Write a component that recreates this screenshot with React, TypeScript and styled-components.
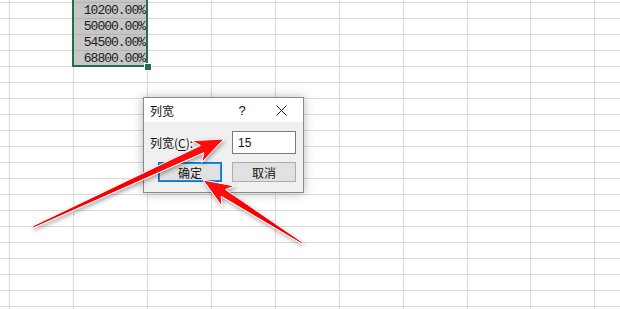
import React from 'react';
import styled, { createGlobalStyle } from 'styled-components';

const GlobalStyle = createGlobalStyle`
  html, body {
    margin: 0;
    padding: 0;
    background: #ffffff;
    overflow: hidden;
  }
  body {
    font-family: "Noto Sans CJK SC", "Liberation Sans", sans-serif;
  }
`;

const COLUMN_WIDTHS = [10, 64, 74, 64, 64, 64, 64, 64, 63, 64, 40];
const ROW_COUNT = 21;
const SELECTED_COLUMN = 2;
const VALUES = ['14400.00%', '10200.00%', '50000.00%', '54500.00%', '68800.00%'];

const Page = styled.div`
  position: relative;
  width: 620px;
  height: 309px;
  overflow: hidden;
`;

const Sheet = styled.div`
  display: grid;
  grid-template-columns: ${COLUMN_WIDTHS.map((w) => `${w}px`).join(' ')};
  grid-auto-rows: 16px;
  margin-top: -13px;
`;

const Cell = styled.div<{ $selected?: boolean }>`
  box-sizing: border-box;
  border-right: 1px solid ${(p) => (p.$selected ? '#b4b4b4' : '#dadada')};
  border-bottom: 1px solid ${(p) => (p.$selected ? '#b4b4b4' : '#dadada')};
  background: ${(p) => (p.$selected ? '#c6c6c6' : '#ffffff')};
  display: flex;
  align-items: flex-end;
  justify-content: flex-end;
  padding-right: 2px;
  font-family: "Liberation Mono", monospace;
  font-size: 13px;
  letter-spacing: -1px;
  line-height: 14px;
  color: #1a1a1a;
  overflow: hidden;
  white-space: nowrap;
`;

const Selection = styled.div`
  position: absolute;
  left: 72px;
  top: -20px;
  width: 76px;
  height: 87px;
  box-sizing: border-box;
  border: 2px solid #217346;
  pointer-events: none;
`;

const FillHandle = styled.div`
  position: absolute;
  left: 144px;
  top: 63px;
  width: 6px;
  height: 6px;
  background: #217346;
  border: 1px solid #ffffff;
  box-sizing: content-box;
`;

const Dialog = styled.div`
  position: absolute;
  left: 143px;
  top: 97px;
  width: 161px;
  height: 96px;
  box-sizing: border-box;
  border: 1px solid #8a8a8a;
  background: #f0f0f0;
  box-shadow: 0 0 10px rgba(0, 0, 0, 0.28);
  display: flex;
  flex-direction: column;
  font-size: 12px;
  color: #111;
`;

const TitleBar = styled.div`
  height: 24px;
  background: #ffffff;
  display: flex;
  align-items: center;
  padding-left: 6px;
`;

const Title = styled.span`
  flex: 1;
`;

const HelpGlyph = styled.span`
  width: 36px;
  text-align: center;
  font-family: "Liberation Sans", sans-serif;
  font-size: 13px;
`;

const CloseButton = styled.span`
  width: 43px;
  height: 24px;
  display: flex;
  align-items: center;
  justify-content: center;
`;

const Body = styled.div`
  flex: 1;
  display: flex;
  flex-direction: column;
  padding: 9px 7px 0 6px;
  gap: 8px;
`;

const FieldRow = styled.div`
  display: flex;
  align-items: center;
  justify-content: space-between;
`;

const Label = styled.span`
  u {
    text-decoration: underline;
    text-underline-offset: 2px;
  }
`;

const Input = styled.div`
  width: 64px;
  height: 23px;
  box-sizing: border-box;
  border: 1px solid #7a7a7a;
  background: #ffffff;
  display: flex;
  align-items: center;
  padding-left: 5px;
  font-family: "Liberation Sans", sans-serif;
  font-size: 12px;
`;

const ButtonRow = styled.div`
  display: flex;
  justify-content: flex-end;
  gap: 10px;
`;

const Button = styled.div<{ $primary?: boolean }>`
  width: 64px;
  height: 20px;
  box-sizing: border-box;
  display: flex;
  align-items: center;
  justify-content: center;
  background: #e1e1e1;
  border: 1px solid ${(p) => (p.$primary ? '#0078d7' : '#adadad')};
  box-shadow: ${(p) => (p.$primary ? 'inset 0 0 0 1px #2a8ae0' : 'none')};
  font-size: 12px;
`;

const Arrows = styled.svg`
  position: absolute;
  left: 0;
  top: 0;
  pointer-events: none;
`;

const Sheetgrid: React.FC = () => {
  const cells: React.ReactNode[] = [];
  for (let r = 0; r < ROW_COUNT; r++) {
    COLUMN_WIDTHS.forEach((_, c) => {
      const selected = c === SELECTED_COLUMN && r < VALUES.length;
      cells.push(
        <Cell key={`${r}-${c}`} $selected={selected}>
          {selected ? VALUES[r] : null}
        </Cell>
      );
    });
  }
  return <Sheet>{cells}</Sheet>;
};

const App: React.FC = () => {
  return (
    <Page>
      <GlobalStyle />
      <Sheetgrid />
      <Selection />
      <FillHandle />

      <Dialog>
        <TitleBar>
          <Title>列宽</Title>
          <HelpGlyph>?</HelpGlyph>
          <CloseButton>
            <svg width="11" height="11" viewBox="0 0 11 11">
              <path d="M0.5 0.5 L10.5 10.5 M10.5 0.5 L0.5 10.5" stroke="#222" strokeWidth="1" />
            </svg>
          </CloseButton>
        </TitleBar>
        <Body>
          <FieldRow>
            <Label>
              列宽(<u>C</u>):
            </Label>
            <Input>15</Input>
          </FieldRow>
          <ButtonRow>
            <Button $primary>确定</Button>
            <Button>取消</Button>
          </ButtonRow>
        </Body>
      </Dialog>

      <Arrows width="620" height="309" viewBox="0 0 620 309">
        <defs>
          <filter id="arrowShadow" x="-20%" y="-20%" width="140%" height="140%">
            <feDropShadow dx="1" dy="2" stdDeviation="2" floodColor="#000" floodOpacity="0.35" />
          </filter>
          <linearGradient id="arrowFill1" x1="33" y1="227" x2="224" y2="139" gradientUnits="userSpaceOnUse">
            <stop offset="0" stopColor="#f00000" />
            <stop offset="1" stopColor="#ff0a0a" />
          </linearGradient>
          <linearGradient id="arrowFill2" x1="302" y1="243" x2="203" y2="180" gradientUnits="userSpaceOnUse">
            <stop offset="0" stopColor="#f00000" />
            <stop offset="1" stopColor="#ff0a0a" />
          </linearGradient>
        </defs>
        <g filter="url(#arrowShadow)" stroke="#ffffff" strokeWidth="1" strokeLinejoin="round">
          <polygon
            fill="url(#arrowFill1)"
            points="32.6,226.1 200.5,145.5 191.7,140.7 224,139 201.7,162.5 203.9,152.7 33.4,227.9"
          />
          <polygon
            fill="url(#arrowFill2)"
            points="302.4,242.3 225.4,189.5 234.7,186 203,180 221.9,206.2 221.2,196.3 301.6,243.7"
          />
        </g>
      </Arrows>
    </Page>
  );
};

export default App;
